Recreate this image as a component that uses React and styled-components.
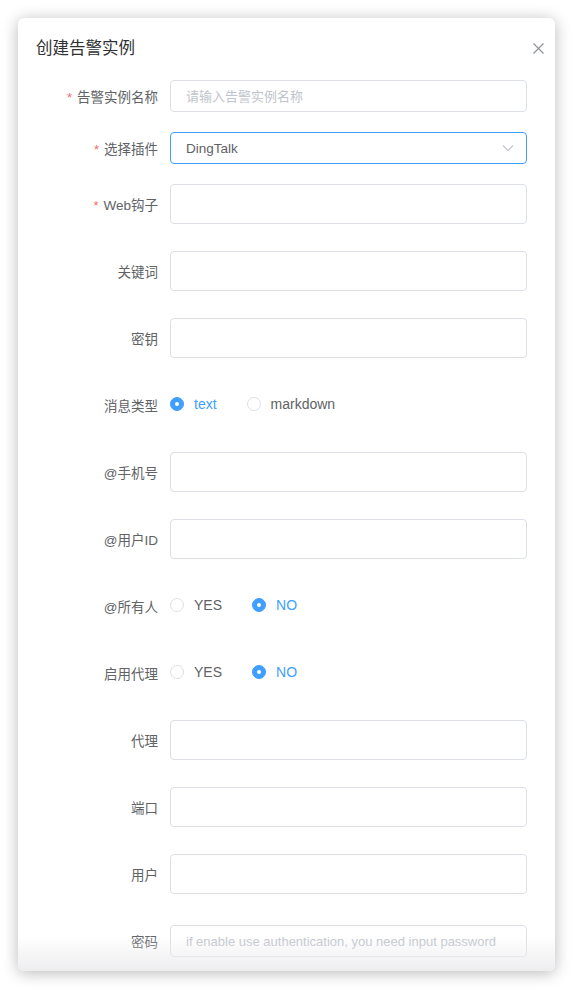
import React from "react";
import styled, { createGlobalStyle } from "styled-components";

const Global = createGlobalStyle`
  html, body { margin: 0; padding: 0; background: #fff; }
  body { font-family: "Liberation Sans", "Noto Sans CJK SC", sans-serif; }
  * { box-sizing: border-box; }
`;

const BLUE = "#409eff";

const Page = styled.div`
  padding: 18px 0 0 18px;
  width: 573px;
  height: 990px;
  overflow: hidden;
`;

const Modal = styled.div`
  position: relative;
  width: 537px;
  height: 953px;
  background: #fff;
  border-radius: 6px;
  box-shadow: 0 2px 16px rgba(0, 0, 0, 0.28);
  overflow: hidden;
  &::after {
    content: "";
    position: absolute;
    left: 0;
    right: 0;
    bottom: 0;
    height: 36px;
    background: linear-gradient(to bottom, rgba(255,255,255,0) 0%, rgba(236,236,238,0.9) 100%);
    pointer-events: none;
  }
`;

const Header = styled.div`
  display: flex;
  align-items: center;
  justify-content: space-between;
  padding: 18px 10px 20px 18px;
`;

const Title = styled.div`
  font-size: 16.5px;
  line-height: 24px;
  color: #303133;
`;

const Close = styled.button`
  border: 0;
  background: none;
  padding: 0;
  width: 14px;
  height: 14px;
  display: flex;
  align-items: center;
  justify-content: center;
  cursor: pointer;
`;

const Form = styled.div`
  display: flex;
  flex-direction: column;
  padding: 0 28px 0 20px;
`;

const Item = styled.div`
  display: flex;
  align-items: center;
  height: ${(p) => p.$h}px;
  margin-bottom: ${(p) => p.$mb}px;
  flex-shrink: 0;
`;

const Label = styled.label`
  width: 132px;
  padding-right: 12px;
  text-align: right;
  font-size: 13.5px;
  color: #606266;
  white-space: nowrap;
`;

const Star = styled.span`
  color: #f56c6c;
  margin-right: 5px;
  font-size: 13px;
`;

const Input = styled.input`
  flex: 1;
  height: ${(p) => p.$h || 40}px;
  border: 1px solid #dcdfe6;
  border-radius: 4px;
  padding: 0 15px;
  font-family: inherit;
  font-size: 13px;
  color: #606266;
  outline: none;
  background: #fff;
  &::placeholder { color: #c0c4cc; }
`;

const SelectBox = styled.div`
  flex: 1;
  height: 32px;
  border: 1px solid ${BLUE};
  border-radius: 4px;
  padding: 0 12px 0 15px;
  display: flex;
  align-items: center;
  justify-content: space-between;
  font-size: 13.5px;
  color: #606266;
`;

const RadioGroup = styled.div`
  display: flex;
  align-items: center;
  margin-top: -2px;
`;

const RadioItem = styled.label`
  display: flex;
  align-items: center;
  margin-right: 30px;
  font-size: 14px;
  color: ${(p) => (p.$checked ? BLUE : "#606266")};
`;

const Dot = styled.span`
  width: 14px;
  height: 14px;
  border-radius: 50%;
  border: 1px solid ${(p) => (p.$checked ? BLUE : "#dcdfe6")};
  background: ${(p) => (p.$checked ? BLUE : "#fff")};
  margin-right: 10px;
  display: flex;
  align-items: center;
  justify-content: center;
  &::after {
    content: "";
    width: 4px;
    height: 4px;
    border-radius: 50%;
    background: #fff;
    display: ${(p) => (p.$checked ? "block" : "none")};
  }
`;

const Radio = ({ checked, children }) => (
  <RadioItem $checked={checked}>
    <Dot $checked={checked} />
    {children}
  </RadioItem>
);

const Field = ({ label, required, h = 40, mb = 27, children }) => (
  <Item $h={h} $mb={mb}>
    <Label>
      {required && <Star>*</Star>}
      {label}
    </Label>
    {children}
  </Item>
);

export default function App() {
  return (
    <>
      <Global />
      <Page>
        <Modal>
          <Header>
            <Title>创建告警实例</Title>
            <Close aria-label="close">
              <svg width="11" height="11" viewBox="0 0 11 11">
                <path d="M0.5 0.5 L10.5 10.5 M10.5 0.5 L0.5 10.5" stroke="#909399" strokeWidth="1.2" fill="none" />
              </svg>
            </Close>
          </Header>
          <Form>
            <Field label="告警实例名称" required h={32} mb={20}>
              <Input $h={32} placeholder="请输入告警实例名称" />
            </Field>
            <Field label="选择插件" required h={32} mb={20}>
              <SelectBox>
                <span>DingTalk</span>
                <svg width="12" height="8" viewBox="0 0 12 8">
                  <path d="M1 1.5 L6 6.5 L11 1.5" stroke="#c0c4cc" strokeWidth="1.1" fill="none" />
                </svg>
              </SelectBox>
            </Field>
            <Field label="Web钩子" required>
              <Input />
            </Field>
            <Field label="关键词">
              <Input />
            </Field>
            <Field label="密钥">
              <Input />
            </Field>
            <Field label="消息类型">
              <RadioGroup>
                <Radio checked>text</Radio>
                <Radio>markdown</Radio>
              </RadioGroup>
            </Field>
            <Field label="@手机号">
              <Input />
            </Field>
            <Field label="@用户ID">
              <Input />
            </Field>
            <Field label="@所有人">
              <RadioGroup>
                <Radio>YES</Radio>
                <Radio checked>NO</Radio>
              </RadioGroup>
            </Field>
            <Field label="启用代理">
              <RadioGroup>
                <Radio>YES</Radio>
                <Radio checked>NO</Radio>
              </RadioGroup>
            </Field>
            <Field label="代理">
              <Input />
            </Field>
            <Field label="端口">
              <Input />
            </Field>
            <Field label="用户">
              <Input />
            </Field>
            <Field label="密码">
              <Input $h={32} placeholder="if enable use authentication, you need input password" />
            </Field>
          </Form>
        </Modal>
      </Page>
    </>
  );
}
